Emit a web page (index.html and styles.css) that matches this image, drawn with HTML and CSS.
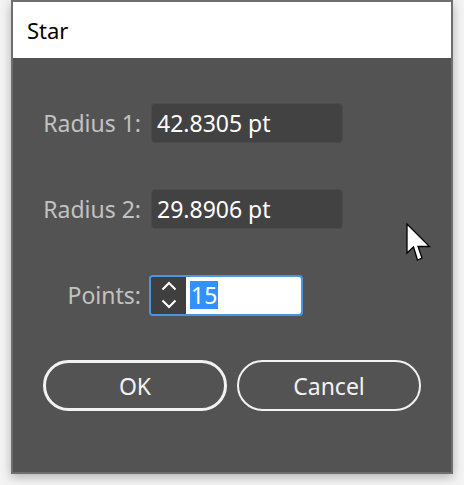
FILE: index.html
```html
<!DOCTYPE html>
<html>
<head>
<meta charset="utf-8">
<link rel="stylesheet" href="styles.css">
</head>
<body>
<div class="window">
  <div class="titlebar">Star</div>
  <div class="content">
    <div class="row">
      <label class="label">Radius 1:</label>
      <div class="field">42.8305 pt</div>
    </div>
    <div class="row">
      <label class="label">Radius 2:</label>
      <div class="field">29.8906 pt</div>
    </div>
    <div class="row">
      <label class="label">Points:</label>
      <div class="spinner">
        <div class="arrows">
          <svg width="16" height="28" viewBox="0 0 16 28"><path d="M1.5 8.5 L8 2 L14.5 8.5" fill="none" stroke="#fff" stroke-width="2"/><path d="M1.5 19.5 L8 26 L14.5 19.5" fill="none" stroke="#fff" stroke-width="2"/></svg>
        </div>
        <div class="spin-input"><span class="sel">15</span></div>
      </div>
    </div>
    <div class="buttons">
      <div class="btn btn-default">OK</div>
      <div class="btn">Cancel</div>
    </div>
    <svg class="cursor" width="28" height="40" viewBox="0 0 28 40"><path d="M1 1 L1 30 L7.5 24 L11.5 37 L16 35 L12 23.5 L23.5 23.5 Z" fill="#fff" stroke="#000" stroke-width="1.3" stroke-linejoin="miter"/></svg>
  </div>
</div>
</body>
</html>
```
FILE: styles.css
```css
html, body {
  margin: 0;
  padding: 0;
}
body {
  background: #f4f4f4;
  width: 464px;
  height: 485px;
  overflow: hidden;
  font-family: "Noto Sans", "Open Sans", sans-serif;
}
.window {
  margin-left: 11px;
  width: 438px;
  border: 2px solid #6e6e6e;
  box-shadow: 0 3px 10px rgba(0, 0, 0, 0.28);
  background: #535353;
}
.titlebar {
  height: 56px;
  background: #fff;
  color: #000;
  font-size: 22px;
  line-height: 56px;
  padding-left: 14px;
}
.content {
  position: relative;
  height: 414px;
  box-sizing: border-box;
  padding-top: 45px;
}
.row {
  display: flex;
  align-items: center;
  margin-bottom: 46px;
  height: 40px;
}
.label {
  width: 128px;
  text-align: right;
  color: #c2c2c2;
  font-size: 23px;
  margin-right: 10px;
}
.field {
  width: 192px;
  height: 40px;
  box-sizing: border-box;
  background: #424242;
  border: 1px solid #4c4c4c;
  border-radius: 4px;
  color: #fff;
  font-size: 23px;
  line-height: 38px;
  padding-left: 5px;
}
.spinner {
  margin-left: -2px;
  width: 154px;
  height: 41px;
  box-sizing: border-box;
  border: 2px solid #4b95e0;
  border-radius: 4px;
  display: flex;
  overflow: hidden;
}
.arrows {
  width: 35px;
  background: #3f3f3f;
  display: flex;
  align-items: center;
  justify-content: center;
}
.spin-input {
  flex: 1;
  background: #fff;
  padding-left: 4px;
  display: flex;
  align-items: center;
}
.sel {
  background: #3390ff;
  color: #fff;
  font-size: 23px;
  line-height: 28px;
  padding: 0 1px;
}
.buttons {
  display: flex;
  gap: 10px;
  padding-left: 30px;
  margin-top: -1px;
}
.btn {
  width: 184px;
  height: 51px;
  box-sizing: border-box;
  border: 2px solid #f2f2f2;
  border-radius: 26px;
  color: #f2f2f2;
  font-size: 23px;
  display: flex;
  align-items: center;
  justify-content: center;
}
.btn-default {
  border-width: 3px;
}
.cursor {
  position: absolute;
  left: 393px;
  top: 165px;
}
```
